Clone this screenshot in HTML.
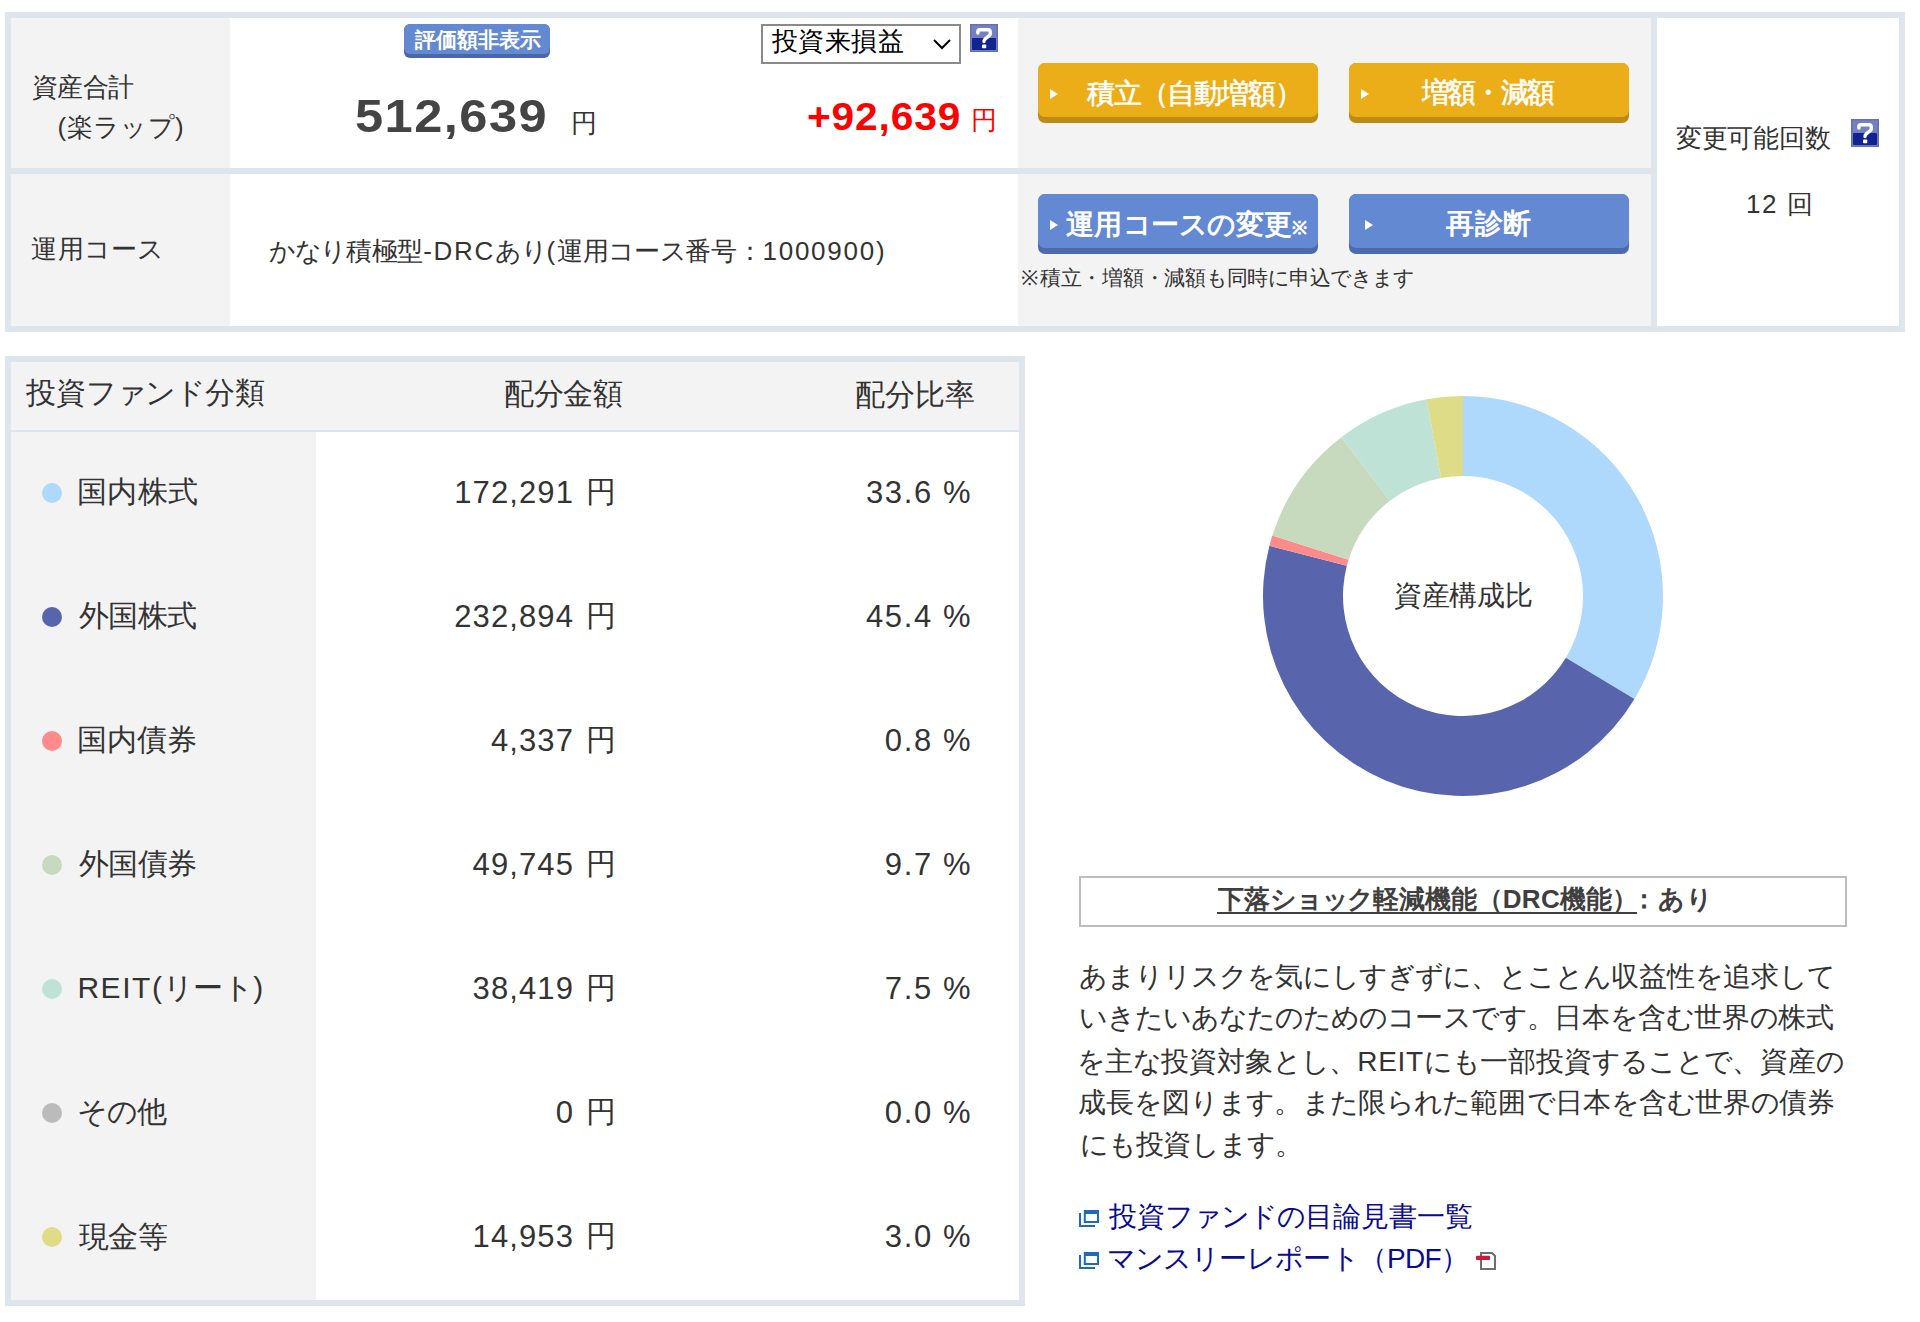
<!DOCTYPE html>
<html><head><meta charset="utf-8">
<style>
html,body{margin:0;padding:0;background:#fff;}
body{width:1920px;height:1322px;overflow:hidden;position:relative;font-family:"Liberation Sans",sans-serif;color:#333;}
.a{position:absolute;white-space:nowrap;}
.c{display:inline-block;width:1em;text-align:center;letter-spacing:0;text-indent:0;}
.bd{background:#dee5ec;}
.g{background:#f3f3f3;}
.w{background:#fff;}
.btn{position:absolute;border-radius:7px;overflow:hidden;}
.btn .top{position:absolute;left:0;right:0;top:0;border-radius:7px;}
.tri{position:absolute;width:0;height:0;border-top:5px solid transparent;border-bottom:5px solid transparent;border-left:8px solid #fff;}
.help{position:absolute;width:28px;height:28px;background:linear-gradient(#6b7fc4 0,#6b7fc4 50%,#15259a 50%,#15259a 100%);}
.help span{position:absolute;left:0;top:0;width:28px;text-align:center;color:#fff;font-weight:bold;font-size:26px;line-height:28px;}
.dot{position:absolute;width:20px;height:20px;border-radius:50%;}
</style></head><body>
<div class="a bd" style="left:5px;top:12px;width:1900px;height:320px;"></div>
<div class="a g" style="left:11px;top:18px;width:219px;height:150px;"></div>
<div class="a w" style="left:230px;top:18px;width:788px;height:150px;"></div>
<div class="a g" style="left:1018px;top:18px;width:633px;height:150px;"></div>
<div class="a g" style="left:11px;top:174px;width:219px;height:152px;"></div>
<div class="a w" style="left:230px;top:174px;width:788px;height:152px;"></div>
<div class="a g" style="left:1018px;top:174px;width:633px;height:152px;"></div>
<div class="a w" style="left:1657px;top:18px;width:242px;height:308px;"></div>

<div class="btn" style="left:404px;top:24px;width:146px;height:34px;background:#4a67aa;border-radius:6px;"><div class="top" style="height:30px;background:#6389d3;border-radius:6px;"></div></div>

<div class="a" style="left:761px;top:24px;width:196px;height:36px;border:2px solid #8a8a8a;background:#fff;"></div>
<svg class="a" style="left:932px;top:38px;" width="20" height="12" viewBox="0 0 20 12"><path d="M2 2 L10 10 L18 2" fill="none" stroke="#000" stroke-width="2"/></svg>
<svg class="a" style="left:970px;top:24px;" width="28" height="28" viewBox="0 0 28 28"><rect x="0" y="0" width="28" height="28" fill="#6870b4"/><rect x="1.5" y="1.5" width="25" height="25" fill="#7580c0"/><rect x="2" y="14" width="24" height="12" rx="1" fill="#10238e"/><path d="M7.9 9 V7.4 Q7.9 5.7 9.8 5.7 H18.2 Q20.2 5.7 20.2 7.8 V10 Q20.2 11 19.3 11.7 L15.3 14.8 Q14 15.8 14 17.2 V17.6" fill="none" stroke="#fff" stroke-width="3.4" stroke-linecap="round" stroke-linejoin="round"/><rect x="12" y="20.5" width="4.3" height="3.7" rx="1" fill="#fff"/></svg>

<div class="btn" style="left:1038px;top:63px;width:280px;height:60px;background:#bd8b15;"><div class="top" style="height:54px;background:#ebae18;"></div><div class="tri" style="left:12px;top:26px;"></div></div>
<div class="btn" style="left:1349px;top:63px;width:280px;height:60px;background:#bd8b15;"><div class="top" style="height:54px;background:#ebae18;"></div><div class="tri" style="left:12px;top:26px;"></div></div>
<div class="btn" style="left:1038px;top:194px;width:280px;height:60px;background:#4d6aab;"><div class="top" style="height:54px;background:#6389d3;"></div><div class="tri" style="left:12px;top:26px;"></div></div>
<div class="btn" style="left:1349px;top:194px;width:280px;height:60px;background:#4d6aab;"><div class="top" style="height:54px;background:#6389d3;"></div><div class="tri" style="left:16px;top:26px;"></div></div>

<svg class="a" style="left:1851px;top:119px;" width="28" height="28" viewBox="0 0 28 28"><rect x="0" y="0" width="28" height="28" fill="#6870b4"/><rect x="1.5" y="1.5" width="25" height="25" fill="#7580c0"/><rect x="2" y="14" width="24" height="12" rx="1" fill="#10238e"/><path d="M7.9 9 V7.4 Q7.9 5.7 9.8 5.7 H18.2 Q20.2 5.7 20.2 7.8 V10 Q20.2 11 19.3 11.7 L15.3 14.8 Q14 15.8 14 17.2 V17.6" fill="none" stroke="#fff" stroke-width="3.4" stroke-linecap="round" stroke-linejoin="round"/><rect x="12" y="20.5" width="4.3" height="3.7" rx="1" fill="#fff"/></svg>

<div class="a bd" style="left:5px;top:356px;width:1020px;height:950px;"></div>
<div class="a g" style="left:11px;top:362px;width:1008px;height:68px;"></div>
<div class="a g" style="left:11px;top:432px;width:305px;height:868px;"></div>
<div class="a w" style="left:316px;top:432px;width:703px;height:868px;"></div>

<svg class="a" style="left:1263px;top:396px;" width="400" height="400" viewBox="-200 -200 400 400"><path d="M0.000 -200.000 A200 200 0 0 1 171.449 102.981 L102.870 61.789 A120 120 0 0 0 0.000 -120.000 Z" fill="#aed8fc"/>
<path d="M171.449 102.981 A200 200 0 0 1 -193.594 -50.213 L-116.156 -30.128 A120 120 0 0 0 102.870 61.789 Z" fill="#5864ab"/>
<path d="M-193.594 -50.213 A200 200 0 0 1 -190.653 -60.428 L-114.392 -36.257 A120 120 0 0 0 -116.156 -30.128 Z" fill="#fd8b8b"/>
<path d="M-190.653 -60.428 A200 200 0 0 1 -121.698 -158.712 L-73.019 -95.227 A120 120 0 0 0 -114.392 -36.257 Z" fill="#c8dabd"/>
<path d="M-121.698 -158.712 A200 200 0 0 1 -36.450 -196.651 L-21.870 -117.990 A120 120 0 0 0 -73.019 -95.227 Z" fill="#bee3d6"/>
<path d="M-36.450 -196.651 A200 200 0 0 1 -0.000 -200.000 L-0.000 -120.000 A120 120 0 0 0 -21.870 -117.990 Z" fill="#dfdc88"/></svg>

<div class="a" style="left:1079px;top:876px;width:764px;height:47px;border:2px solid #bdbdbd;"></div>
<div class="a" style="left:1217px;top:912px;width:420px;height:2px;background:#3f3f3f;"></div>

<svg class="a" style="left:1079px;top:1209px;" width="21" height="19" viewBox="0 0 21 19"><path d="M1 4 V17 H16" fill="none" stroke="#1e6bb8" stroke-width="2"/><path d="M4.8 1 H20 V14 H4.8 Z M6.8 5 V12 H18 V5 Z" fill="#1e6bb8" fill-rule="evenodd"/></svg>
<svg class="a" style="left:1079px;top:1251px;" width="21" height="19" viewBox="0 0 21 19"><path d="M1 4 V17 H16" fill="none" stroke="#1e6bb8" stroke-width="2"/><path d="M4.8 1 H20 V14 H4.8 Z M6.8 5 V12 H18 V5 Z" fill="#1e6bb8" fill-rule="evenodd"/></svg>
<svg class="a" style="left:1476px;top:1252px;" width="21" height="19" viewBox="0 0 21 19"><path d="M5 1 H16 L19 4 V17 H5 Z" fill="#fff" stroke="#6e6e6e" stroke-width="2"/><rect x="0" y="3.7" width="14" height="4.3" rx="1" fill="#d2163c"/></svg>
<div class="a" id="shisan" style="font-size:26px;line-height:31px;color:#333;letter-spacing:0.000px;top:72.00px;left:32.00px;"><span class="c" style="width:25.250px">資</span><span class="c" style="width:25.250px">産</span><span class="c" style="width:25.250px">合</span><span class="c" style="width:25.250px">計</span></div>
<div class="a" id="raku" style="font-size:26px;line-height:31px;color:#333;letter-spacing:0.360px;top:112.00px;left:57.50px;">(楽ラップ)</div>
<div class="a" id="num" style="font-size:46px;line-height:55px;color:#444;letter-spacing:1.333px;top:89.20px;font-weight:bold;left:355.00px;transform:scaleX(1.1);transform-origin:0 0;">512,639</div>
<div class="a" id="en1" style="font-size:26px;line-height:31px;color:#333;letter-spacing:0.000px;top:107.50px;left:571.00px;"><span class="c" style="width:26.000px">円</span></div>
<div class="a" id="badge" style="font-size:21px;line-height:25px;color:#fff;letter-spacing:0.000px;top:26.50px;font-weight:bold;left:415.00px;"><span class="c" style="width:21.000px">評</span><span class="c" style="width:21.000px">価</span><span class="c" style="width:21.000px">額</span><span class="c" style="width:21.000px">非</span><span class="c" style="width:21.000px">表</span><span class="c" style="width:21.000px">示</span></div>
<div class="a" id="sel" style="font-size:26px;line-height:31px;color:#000;letter-spacing:0.000px;top:26.00px;left:771.60px;"><span class="c" style="width:26.450px">投</span><span class="c" style="width:26.450px">資</span><span class="c" style="width:26.450px">来</span><span class="c" style="width:26.450px">損</span><span class="c" style="width:26.450px">益</span></div>
<div class="a" id="red" style="font-size:38px;line-height:46px;color:#f00;letter-spacing:0.800px;top:93.90px;font-weight:bold;left:807.00px;transform:scaleX(1.07);transform-origin:0 0;">+92,639</div>
<div class="a" id="red_en" style="font-size:26px;line-height:31px;color:#f00;letter-spacing:0.000px;top:104.50px;left:971.00px;"><span class="c" style="width:26.000px">円</span></div>
<div class="a" id="b1" style="font-size:28px;line-height:34px;color:#fff;letter-spacing:0.000px;top:76.50px;left:1087.00px;-webkit-text-stroke:0.6px #fff;"><span class="c" style="width:26.843px">積</span><span class="c" style="width:26.843px">立</span><span class="c" style="width:26.843px">（</span><span class="c" style="width:26.843px">自</span><span class="c" style="width:26.843px">動</span><span class="c" style="width:26.843px">増</span><span class="c" style="width:26.843px">額</span><span class="c" style="width:26.843px">）</span></div>
<div class="a" id="b2" style="font-size:28px;line-height:34px;color:#fff;letter-spacing:0.000px;top:76.00px;left:1422.00px;-webkit-text-stroke:0.6px #fff;"><span class="c" style="width:26.200px">増</span><span class="c" style="width:26.200px">額</span><span class="c" style="width:26.200px">・</span><span class="c" style="width:26.200px">減</span><span class="c" style="width:26.200px">額</span></div>
<div class="a" id="b3" style="font-size:28px;line-height:34px;color:#fff;letter-spacing:0.000px;top:208.00px;left:1066.00px;-webkit-text-stroke:0.9px #fff;"><span class="c" style="width:28.282px">運</span><span class="c" style="width:28.282px">用</span><span class="c" style="width:28.282px">コ</span><span class="c" style="width:28.282px">ー</span><span class="c" style="width:28.282px">ス</span><span class="c" style="width:28.282px">の</span><span class="c" style="width:28.282px">変</span><span class="c" style="width:28.282px">更</span><span style="font-size:18px">※</span></div>
<div class="a" id="b4" style="font-size:28px;line-height:34px;color:#fff;letter-spacing:0.000px;top:207.00px;left:1446.00px;-webkit-text-stroke:0.9px #fff;"><span class="c" style="width:28.450px">再</span><span class="c" style="width:28.450px">診</span><span class="c" style="width:28.450px">断</span></div>
<div class="a" id="note" style="font-size:20.8px;line-height:25px;color:#333;letter-spacing:0.000px;top:264.50px;left:1019.00px;"><span class="c" style="width:20.750px">※</span><span class="c" style="width:20.750px">積</span><span class="c" style="width:20.750px">立</span><span class="c" style="width:20.750px">・</span><span class="c" style="width:20.750px">増</span><span class="c" style="width:20.750px">額</span><span class="c" style="width:20.750px">・</span><span class="c" style="width:20.750px">減</span><span class="c" style="width:20.750px">額</span><span class="c" style="width:20.750px">も</span><span class="c" style="width:20.750px">同</span><span class="c" style="width:20.750px">時</span><span class="c" style="width:20.750px">に</span><span class="c" style="width:20.750px">申</span><span class="c" style="width:20.750px">込</span><span class="c" style="width:20.750px">で</span><span class="c" style="width:20.750px">き</span><span class="c" style="width:20.750px">ま</span><span class="c" style="width:20.750px">す</span></div>
<div class="a" id="unyo" style="font-size:26px;line-height:31px;color:#333;letter-spacing:0.000px;top:233.50px;left:31.00px;"><span class="c" style="width:26.564px">運</span><span class="c" style="width:26.564px">用</span><span class="c" style="width:26.564px">コ</span><span class="c" style="width:26.564px">ー</span><span class="c" style="width:26.564px">ス</span></div>
<div class="a" id="course" style="font-size:26px;line-height:31px;color:#333;letter-spacing:1.759px;top:235.71px;left:269.00px;"><span class="c" style="width:25.700px">か</span><span class="c" style="width:25.700px">な</span><span class="c" style="width:25.700px">り</span><span class="c" style="width:25.700px">積</span><span class="c" style="width:25.700px">極</span><span class="c" style="width:25.700px">型</span>-DRC<span class="c" style="width:25.700px">あ</span><span class="c" style="width:25.700px">り</span>(<span class="c" style="width:25.700px">運</span><span class="c" style="width:25.700px">用</span><span class="c" style="width:25.700px">コ</span><span class="c" style="width:25.700px">ー</span><span class="c" style="width:25.700px">ス</span><span class="c" style="width:25.700px">番</span><span class="c" style="width:25.700px">号</span><span class="c" style="width:25.700px">：</span>1000900)</div>
<div class="a" id="henko" style="font-size:26px;line-height:31px;color:#333;letter-spacing:0.000px;top:122.50px;left:1676.00px;"><span class="c" style="width:25.730px">変</span><span class="c" style="width:25.730px">更</span><span class="c" style="width:25.730px">可</span><span class="c" style="width:25.730px">能</span><span class="c" style="width:25.730px">回</span><span class="c" style="width:25.730px">数</span></div>
<div class="a" id="twelve" style="font-size:26px;line-height:31px;color:#333;letter-spacing:1.500px;top:189.00px;left:1746.00px;">12 <span class="c" style="width:26.000px">回</span></div>
<div class="a" id="hdr1" style="font-size:30px;line-height:36px;color:#333;letter-spacing:0.000px;top:375.00px;left:26.00px;"><span class="c" style="width:29.872px">投</span><span class="c" style="width:29.872px">資</span><span class="c" style="width:29.872px">フ</span><span class="c" style="width:29.872px">ァ</span><span class="c" style="width:29.872px">ン</span><span class="c" style="width:29.872px">ド</span><span class="c" style="width:29.872px">分</span><span class="c" style="width:29.872px">類</span></div>
<div class="a" id="hdr2" style="font-size:30px;line-height:36px;color:#333;letter-spacing:0.000px;top:376.00px;left:504.00px;"><span class="c" style="width:29.700px">配</span><span class="c" style="width:29.700px">分</span><span class="c" style="width:29.700px">金</span><span class="c" style="width:29.700px">額</span></div>
<div class="a" id="hdr3" style="font-size:30px;line-height:36px;color:#333;letter-spacing:0.000px;top:377.00px;left:855.00px;"><span class="c" style="width:29.850px">配</span><span class="c" style="width:29.850px">分</span><span class="c" style="width:29.850px">比</span><span class="c" style="width:29.850px">率</span></div>
<div class="a" id="name0" style="font-size:30px;line-height:36px;color:#333;letter-spacing:0.000px;top:473.70px;left:76.80px;"><span class="c" style="width:30.300px">国</span><span class="c" style="width:30.300px">内</span><span class="c" style="width:30.300px">株</span><span class="c" style="width:30.300px">式</span></div>
<div class="a" id="name1" style="font-size:30px;line-height:36px;color:#333;letter-spacing:0.000px;top:598.00px;left:79.00px;"><span class="c" style="width:29.400px">外</span><span class="c" style="width:29.400px">国</span><span class="c" style="width:29.400px">株</span><span class="c" style="width:29.400px">式</span></div>
<div class="a" id="name2" style="font-size:30px;line-height:36px;color:#333;letter-spacing:0.000px;top:721.50px;left:77.00px;"><span class="c" style="width:30.000px">国</span><span class="c" style="width:30.000px">内</span><span class="c" style="width:30.000px">債</span><span class="c" style="width:30.000px">券</span></div>
<div class="a" id="name3" style="font-size:30px;line-height:36px;color:#333;letter-spacing:0.000px;top:845.50px;left:79.00px;"><span class="c" style="width:29.400px">外</span><span class="c" style="width:29.400px">国</span><span class="c" style="width:29.400px">債</span><span class="c" style="width:29.400px">券</span></div>
<div class="a" id="name4" style="font-size:30px;line-height:36px;color:#333;letter-spacing:1.545px;top:970.40px;left:77.40px;">REIT(<span class="c" style="width:29.900px">リ</span><span class="c" style="width:29.900px">ー</span><span class="c" style="width:29.900px">ト</span>)</div>
<div class="a" id="name5" style="font-size:30px;line-height:36px;color:#333;letter-spacing:0.000px;top:1093.50px;left:77.00px;"><span class="c" style="width:29.775px">そ</span><span class="c" style="width:29.775px">の</span><span class="c" style="width:29.775px">他</span></div>
<div class="a" id="name6" style="font-size:30px;line-height:36px;color:#333;letter-spacing:0.000px;top:1218.50px;left:79.00px;"><span class="c" style="width:29.325px">現</span><span class="c" style="width:29.325px">金</span><span class="c" style="width:29.325px">等</span></div>
<div class="a" id="center" style="font-size:28px;line-height:34px;color:#333;letter-spacing:0.000px;top:578.50px;left:1394.00px;"><span class="c" style="width:27.665px">資</span><span class="c" style="width:27.665px">産</span><span class="c" style="width:27.665px">構</span><span class="c" style="width:27.665px">成</span><span class="c" style="width:27.665px">比</span></div>
<div class="a" id="drc1" style="font-size:26px;line-height:31px;color:#3f3f3f;letter-spacing:0.300px;top:883.50px;font-weight:bold;left:1218.00px;"><span class="c" style="width:25.900px">下</span><span class="c" style="width:25.900px">落</span><span class="c" style="width:25.900px">シ</span><span class="c" style="width:25.900px">ョ</span><span class="c" style="width:25.900px">ッ</span><span class="c" style="width:25.900px">ク</span><span class="c" style="width:25.900px">軽</span><span class="c" style="width:25.900px">減</span><span class="c" style="width:25.900px">機</span><span class="c" style="width:25.900px">能</span><span class="c" style="width:25.900px">（</span>DRC<span class="c" style="width:25.900px">機</span><span class="c" style="width:25.900px">能</span><span class="c" style="width:25.900px">）</span></div>
<div class="a" id="drc2" style="font-size:26px;line-height:31px;color:#3f3f3f;letter-spacing:0.000px;top:883.70px;font-weight:bold;left:1630.00px;"><span class="c" style="width:27.800px">：</span><span class="c" style="width:27.800px">あ</span><span class="c" style="width:27.800px">り</span></div>
<div class="a" id="p1" style="font-size:28px;line-height:34px;color:#333;letter-spacing:0.000px;top:959.50px;left:1079.00px;"><span class="c" style="width:28.015px">あ</span><span class="c" style="width:28.015px">ま</span><span class="c" style="width:28.015px">り</span><span class="c" style="width:28.015px">リ</span><span class="c" style="width:28.015px">ス</span><span class="c" style="width:28.015px">ク</span><span class="c" style="width:28.015px">を</span><span class="c" style="width:28.015px">気</span><span class="c" style="width:28.015px">に</span><span class="c" style="width:28.015px">し</span><span class="c" style="width:28.015px">す</span><span class="c" style="width:28.015px">ぎ</span><span class="c" style="width:28.015px">ず</span><span class="c" style="width:28.015px">に</span><span class="c" style="width:28.015px">、</span><span class="c" style="width:28.015px">と</span><span class="c" style="width:28.015px">こ</span><span class="c" style="width:28.015px">と</span><span class="c" style="width:28.015px">ん</span><span class="c" style="width:28.015px">収</span><span class="c" style="width:28.015px">益</span><span class="c" style="width:28.015px">性</span><span class="c" style="width:28.015px">を</span><span class="c" style="width:28.015px">追</span><span class="c" style="width:28.015px">求</span><span class="c" style="width:28.015px">し</span><span class="c" style="width:28.015px">て</span></div>
<div class="a" id="p2" style="font-size:28px;line-height:34px;color:#333;letter-spacing:0.000px;top:1001.00px;left:1079.00px;"><span class="c" style="width:27.982px">い</span><span class="c" style="width:27.982px">き</span><span class="c" style="width:27.982px">た</span><span class="c" style="width:27.982px">い</span><span class="c" style="width:27.982px">あ</span><span class="c" style="width:27.982px">な</span><span class="c" style="width:27.982px">た</span><span class="c" style="width:27.982px">の</span><span class="c" style="width:27.982px">た</span><span class="c" style="width:27.982px">め</span><span class="c" style="width:27.982px">の</span><span class="c" style="width:27.982px">コ</span><span class="c" style="width:27.982px">ー</span><span class="c" style="width:27.982px">ス</span><span class="c" style="width:27.982px">で</span><span class="c" style="width:27.982px">す</span><span class="c" style="width:27.982px">。</span><span class="c" style="width:27.982px">日</span><span class="c" style="width:27.982px">本</span><span class="c" style="width:27.982px">を</span><span class="c" style="width:27.982px">含</span><span class="c" style="width:27.982px">む</span><span class="c" style="width:27.982px">世</span><span class="c" style="width:27.982px">界</span><span class="c" style="width:27.982px">の</span><span class="c" style="width:27.982px">株</span><span class="c" style="width:27.982px">式</span></div>
<div class="a" id="p3" style="font-size:28px;line-height:34px;color:#333;letter-spacing:0.747px;top:1044.50px;left:1077.20px;"><span class="c" style="width:28.000px">を</span><span class="c" style="width:28.000px">主</span><span class="c" style="width:28.000px">な</span><span class="c" style="width:28.000px">投</span><span class="c" style="width:28.000px">資</span><span class="c" style="width:28.000px">対</span><span class="c" style="width:28.000px">象</span><span class="c" style="width:28.000px">と</span><span class="c" style="width:28.000px">し</span><span class="c" style="width:28.000px">、</span>REIT<span class="c" style="width:28.000px">に</span><span class="c" style="width:28.000px">も</span><span class="c" style="width:28.000px">一</span><span class="c" style="width:28.000px">部</span><span class="c" style="width:28.000px">投</span><span class="c" style="width:28.000px">資</span><span class="c" style="width:28.000px">す</span><span class="c" style="width:28.000px">る</span><span class="c" style="width:28.000px">こ</span><span class="c" style="width:28.000px">と</span><span class="c" style="width:28.000px">で</span><span class="c" style="width:28.000px">、</span><span class="c" style="width:28.000px">資</span><span class="c" style="width:28.000px">産</span><span class="c" style="width:28.000px">の</span></div>
<div class="a" id="p4" style="font-size:28px;line-height:34px;color:#333;letter-spacing:0.000px;top:1086.00px;left:1078.00px;"><span class="c" style="width:28.035px">成</span><span class="c" style="width:28.035px">長</span><span class="c" style="width:28.035px">を</span><span class="c" style="width:28.035px">図</span><span class="c" style="width:28.035px">り</span><span class="c" style="width:28.035px">ま</span><span class="c" style="width:28.035px">す</span><span class="c" style="width:28.035px">。</span><span class="c" style="width:28.035px">ま</span><span class="c" style="width:28.035px">た</span><span class="c" style="width:28.035px">限</span><span class="c" style="width:28.035px">ら</span><span class="c" style="width:28.035px">れ</span><span class="c" style="width:28.035px">た</span><span class="c" style="width:28.035px">範</span><span class="c" style="width:28.035px">囲</span><span class="c" style="width:28.035px">で</span><span class="c" style="width:28.035px">日</span><span class="c" style="width:28.035px">本</span><span class="c" style="width:28.035px">を</span><span class="c" style="width:28.035px">含</span><span class="c" style="width:28.035px">む</span><span class="c" style="width:28.035px">世</span><span class="c" style="width:28.035px">界</span><span class="c" style="width:28.035px">の</span><span class="c" style="width:28.035px">債</span><span class="c" style="width:28.035px">券</span></div>
<div class="a" id="p5" style="font-size:28px;line-height:34px;color:#333;letter-spacing:0.000px;top:1128.00px;left:1080.00px;"><span class="c" style="width:27.806px">に</span><span class="c" style="width:27.806px">も</span><span class="c" style="width:27.806px">投</span><span class="c" style="width:27.806px">資</span><span class="c" style="width:27.806px">し</span><span class="c" style="width:27.806px">ま</span><span class="c" style="width:27.806px">す</span><span class="c" style="width:27.806px">。</span></div>
<div class="a" id="l1" style="font-size:28px;line-height:34px;color:#0b0b8f;letter-spacing:0.000px;top:1200.00px;left:1109.00px;"><span class="c" style="width:28.000px">投</span><span class="c" style="width:28.000px">資</span><span class="c" style="width:28.000px">フ</span><span class="c" style="width:28.000px">ァ</span><span class="c" style="width:28.000px">ン</span><span class="c" style="width:28.000px">ド</span><span class="c" style="width:28.000px">の</span><span class="c" style="width:28.000px">目</span><span class="c" style="width:28.000px">論</span><span class="c" style="width:28.000px">見</span><span class="c" style="width:28.000px">書</span><span class="c" style="width:28.000px">一</span><span class="c" style="width:28.000px">覧</span></div>
<div class="a" id="l2" style="font-size:28px;line-height:34px;color:#0b0b8f;letter-spacing:-0.660px;top:1241.60px;left:1107.00px;"><span class="c" style="width:28.000px">マ</span><span class="c" style="width:28.000px">ン</span><span class="c" style="width:28.000px">ス</span><span class="c" style="width:28.000px">リ</span><span class="c" style="width:28.000px">ー</span><span class="c" style="width:28.000px">レ</span><span class="c" style="width:28.000px">ポ</span><span class="c" style="width:28.000px">ー</span><span class="c" style="width:28.000px">ト</span><span class="c" style="width:28.000px">（</span>PDF<span class="c" style="width:28.000px">）</span></div>
<div class="dot" style="left:42px;top:482.5px;background:#aed8fc;"></div>
<div class="a" id="amt0" style="font-size:31px;line-height:37px;color:#333;letter-spacing:1.101px;top:473.70px;right:1346.00px;">172,291</div>
<div class="a" id="yen0" style="font-size:30px;line-height:36px;color:#333;letter-spacing:0.000px;top:473.92px;left:586.00px;"><span class="c" style="width:30.000px">円</span></div>
<div class="a" id="pct0" style="font-size:31px;line-height:37px;color:#333;letter-spacing:1.680px;top:473.50px;right:987.00px;">33.6</div>
<div class="a" id="pc0" style="font-size:31px;line-height:37px;color:#333;letter-spacing:0.000px;top:473.50px;left:943.00px;">%</div>
<div class="dot" style="left:42px;top:606.5px;background:#5864ab;"></div>
<div class="a" id="amt1" style="font-size:31px;line-height:37px;color:#333;letter-spacing:1.101px;top:597.70px;right:1346.00px;">232,894</div>
<div class="a" id="yen1" style="font-size:30px;line-height:36px;color:#333;letter-spacing:0.000px;top:597.92px;left:586.00px;"><span class="c" style="width:30.000px">円</span></div>
<div class="a" id="pct1" style="font-size:31px;line-height:37px;color:#333;letter-spacing:1.680px;top:597.50px;right:987.00px;">45.4</div>
<div class="a" id="pc1" style="font-size:31px;line-height:37px;color:#333;letter-spacing:0.000px;top:597.50px;left:943.00px;">%</div>
<div class="dot" style="left:42px;top:730.5px;background:#fd8b8b;"></div>
<div class="a" id="amt2" style="font-size:31px;line-height:37px;color:#333;letter-spacing:1.101px;top:721.70px;right:1346.00px;">4,337</div>
<div class="a" id="yen2" style="font-size:30px;line-height:36px;color:#333;letter-spacing:0.000px;top:721.92px;left:586.00px;"><span class="c" style="width:30.000px">円</span></div>
<div class="a" id="pct2" style="font-size:31px;line-height:37px;color:#333;letter-spacing:1.680px;top:721.50px;right:987.00px;">0.8</div>
<div class="a" id="pc2" style="font-size:31px;line-height:37px;color:#333;letter-spacing:0.000px;top:721.50px;left:943.00px;">%</div>
<div class="dot" style="left:42px;top:854.5px;background:#c8dabd;"></div>
<div class="a" id="amt3" style="font-size:31px;line-height:37px;color:#333;letter-spacing:1.101px;top:845.70px;right:1346.00px;">49,745</div>
<div class="a" id="yen3" style="font-size:30px;line-height:36px;color:#333;letter-spacing:0.000px;top:845.92px;left:586.00px;"><span class="c" style="width:30.000px">円</span></div>
<div class="a" id="pct3" style="font-size:31px;line-height:37px;color:#333;letter-spacing:1.680px;top:845.50px;right:987.00px;">9.7</div>
<div class="a" id="pc3" style="font-size:31px;line-height:37px;color:#333;letter-spacing:0.000px;top:845.50px;left:943.00px;">%</div>
<div class="dot" style="left:42px;top:978.5px;background:#bee3d6;"></div>
<div class="a" id="amt4" style="font-size:31px;line-height:37px;color:#333;letter-spacing:1.101px;top:969.70px;right:1346.00px;">38,419</div>
<div class="a" id="yen4" style="font-size:30px;line-height:36px;color:#333;letter-spacing:0.000px;top:969.92px;left:586.00px;"><span class="c" style="width:30.000px">円</span></div>
<div class="a" id="pct4" style="font-size:31px;line-height:37px;color:#333;letter-spacing:1.680px;top:969.50px;right:987.00px;">7.5</div>
<div class="a" id="pc4" style="font-size:31px;line-height:37px;color:#333;letter-spacing:0.000px;top:969.50px;left:943.00px;">%</div>
<div class="dot" style="left:42px;top:1102.5px;background:#bbbbbb;"></div>
<div class="a" id="amt5" style="font-size:31px;line-height:37px;color:#333;letter-spacing:1.101px;top:1093.70px;right:1346.00px;">0</div>
<div class="a" id="yen5" style="font-size:30px;line-height:36px;color:#333;letter-spacing:0.000px;top:1093.92px;left:586.00px;"><span class="c" style="width:30.000px">円</span></div>
<div class="a" id="pct5" style="font-size:31px;line-height:37px;color:#333;letter-spacing:1.680px;top:1093.50px;right:987.00px;">0.0</div>
<div class="a" id="pc5" style="font-size:31px;line-height:37px;color:#333;letter-spacing:0.000px;top:1093.50px;left:943.00px;">%</div>
<div class="dot" style="left:42px;top:1226.5px;background:#dfdc88;"></div>
<div class="a" id="amt6" style="font-size:31px;line-height:37px;color:#333;letter-spacing:1.101px;top:1217.70px;right:1346.00px;">14,953</div>
<div class="a" id="yen6" style="font-size:30px;line-height:36px;color:#333;letter-spacing:0.000px;top:1217.92px;left:586.00px;"><span class="c" style="width:30.000px">円</span></div>
<div class="a" id="pct6" style="font-size:31px;line-height:37px;color:#333;letter-spacing:1.680px;top:1217.50px;right:987.00px;">3.0</div>
<div class="a" id="pc6" style="font-size:31px;line-height:37px;color:#333;letter-spacing:0.000px;top:1217.50px;left:943.00px;">%</div>
</body></html>
